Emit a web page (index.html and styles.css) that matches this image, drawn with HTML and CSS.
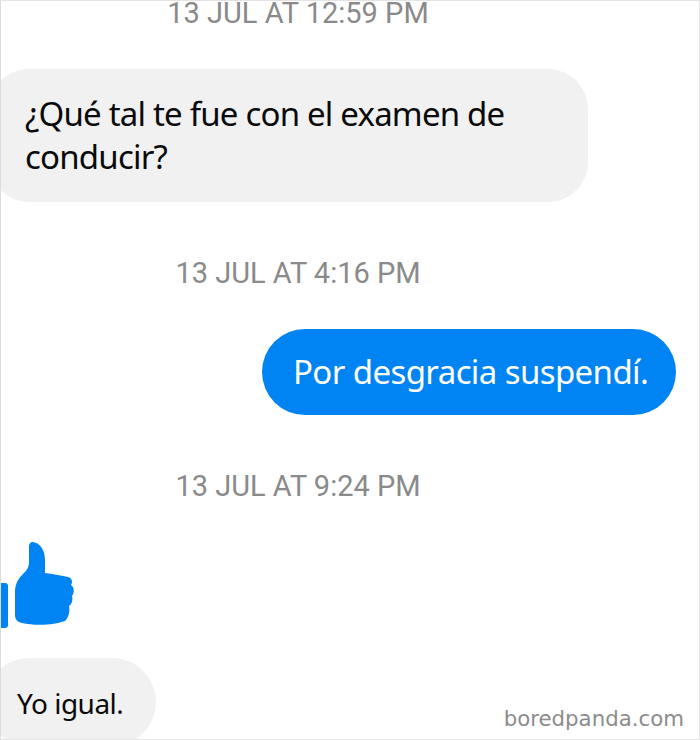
FILE: index.html
```html
<!DOCTYPE html>
<html lang="es">
<head>
<meta charset="UTF-8">
<meta name="viewport" content="width=device-width, initial-scale=1.0">
<title>Mensajes</title>
<link rel="stylesheet" href="styles.css">
</head>
<body>
<div class="chat">
  <div class="time time-first">13 JUL AT 12:59 PM</div>
  <div class="bubble bubble-in bubble-long">¿Qué tal te fue con el examen de conducir?</div>

  <div class="time time-next">13 JUL AT 4:16 PM</div>
  <div class="row-out">
    <div class="bubble bubble-out">Por desgracia suspendí.</div>
  </div>

  <div class="time time-next">13 JUL AT 9:24 PM</div>
  <svg class="thumb" width="75" height="100" viewBox="0 0 75 100">
    <rect x="-4" y="53" width="12" height="45" rx="3" fill="#0084f4"/>
    <path fill="#0084f4" d="M15 60C16 52 19 48 23 44C27 40 29 37 29 32L29 17C29 13 31 12 33 12C40 13 45 20 45 30L45 43C52 44 60 45 68 47C72 48 73 52 71 55C74 57 75 62 72 66C73 70 72 74 69 76C70 81 69 87 65 91C55 95 35 96 22 93C17 92 15 89 15 85Z"/>
  </svg>
  <div class="bubble bubble-in bubble-short">Yo igual.</div>
</div>
<div class="watermark">boredpanda.com</div>
</body>
</html>
```
FILE: styles.css
```css
html, body {
  margin: 0;
  height: 740px;
  overflow: hidden;
  background: #fff;
}

body {
  position: relative;
}

.chat {
  height: 740px;
  box-sizing: border-box;
  border: 1px solid #e4e4e4;
  border-left-color: #dcdcdc;
  overflow: hidden;
}

.time {
  font-family: Roboto, sans-serif;
  font-size: 29px;
  line-height: 32px;
  color: #8a8a8a;
  text-align: center;
  width: 594px;
}

.time-first {
  line-height: 24px;
}

.time-next {
  margin-top: 55px;
}

.bubble {
  font-family: "Noto Sans", sans-serif;
  box-sizing: border-box;
}

.bubble-in {
  background: #f1f1f1;
  color: #0a0a0a;
}

.bubble-long {
  width: 599px;
  height: 133px;
  margin-top: 44px;
  margin-left: -12px;
  padding: 23px 60px 0 36px;
  font-size: 33px;
  line-height: 43px;
  letter-spacing: -0.8px;
  border-radius: 40px;
}

.row-out {
  display: flex;
  justify-content: flex-end;
  padding-right: 23px;
  margin-top: 40px;
}

.bubble-out {
  width: 414px;
  height: 86px;
  padding-left: 31px;
  font-size: 33px;
  line-height: 86px;
  letter-spacing: -0.6px;
  color: #fff;
  background: #0084f4;
  border-radius: 43px;
}

.thumb {
  display: block;
  margin-top: 28px;
  margin-left: -1px;
}

.bubble-short {
  width: 171px;
  height: 88px;
  margin-top: 28px;
  margin-left: -16px;
  padding-left: 32px;
  font-size: 28px;
  line-height: 90px;
  letter-spacing: -0.5px;
  border-radius: 44px;
}

.watermark {
  position: absolute;
  right: 16px;
  bottom: 9px;
  font-family: "DejaVu Sans", sans-serif;
  font-size: 21.3px;
  color: #8c8c8c;
}
```
